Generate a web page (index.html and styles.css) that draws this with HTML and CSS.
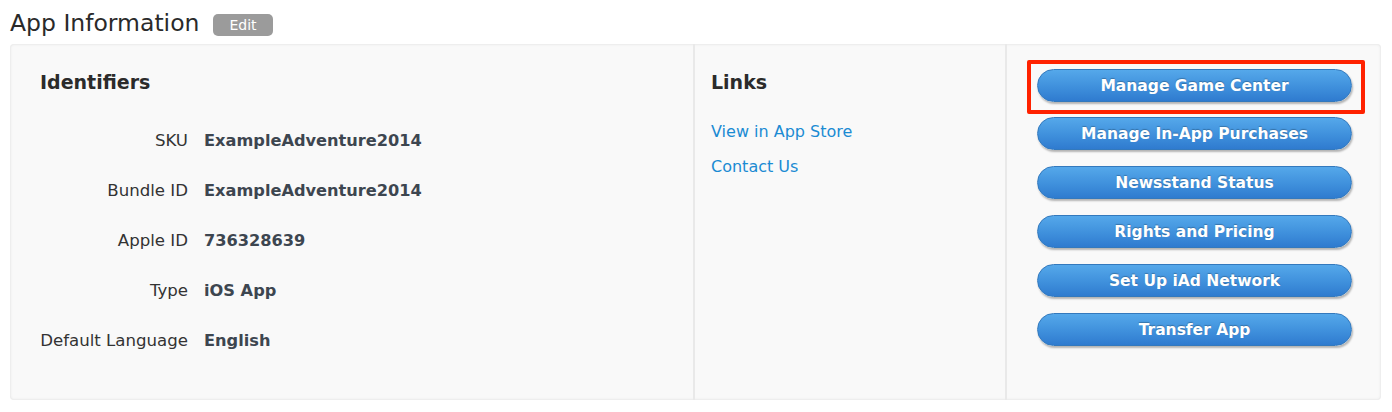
FILE: index.html
```html
<!DOCTYPE html>
<html lang="en">
<head>
    <meta charset="UTF-8">
    <title>App Information</title>
<link rel="stylesheet" href="styles.css">
</head>
<body>
    <div class="header">
        <h2>App Information</h2>
        <span class="edit">Edit</span>
    </div>
    <div class="panel">
        <div class="col identifiers">
            <h3>Identifiers</h3>
            <div class="rows">
                <div class="label">SKU</div><div class="value">ExampleAdventure2014</div>
                <div class="label">Bundle ID</div><div class="value">ExampleAdventure2014</div>
                <div class="label">Apple ID</div><div class="value">736328639</div>
                <div class="label">Type</div><div class="value">iOS App</div>
                <div class="label">Default Language</div><div class="value">English</div>
            </div>
        </div>
        <div class="col links">
            <h3>Links</h3>
            <a href="#">View in App Store</a>
            <a href="#">Contact Us</a>
        </div>
        <div class="col actions">
            <div class="highlight">
                <button class="pill">Manage Game Center</button>
            </div>
            <button class="pill">Manage In-App Purchases</button>
            <button class="pill">Newsstand Status</button>
            <button class="pill">Rights and Pricing</button>
            <button class="pill">Set Up iAd Network</button>
            <button class="pill">Transfer App</button>
        </div>
    </div>
</body>
</html>
```

FILE: styles.css
```css
body {
    margin: 0;
    padding: 8px 10px 0 10px;
    background: #fff;
    font-family: "DejaVu Sans", "Open Sans", sans-serif;
    color: #333;
}
.header {
    display: flex;
    align-items: center;
    height: 30px;
}
.header h2 {
    margin: 0;
    font-size: 23.5px;
    font-weight: normal;
    color: #2a2a2a;
}
.edit {
    margin-left: 14px;
    margin-top: 4px;
    background: #9b9b9b;
    color: #fff;
    font-size: 14px;
    padding: 0 16px;
    height: 22px;
    line-height: 22px;
    border-radius: 5px;
}
.panel {
    display: flex;
    margin-top: 6px;
    width: 1371px;
    height: 356px;
    background: #f9f9f9;
    border-radius: 4px;
    box-shadow: inset 0 0 3px rgba(0, 0, 0, 0.12);
    box-sizing: border-box;
}
.col h3 {
    margin: 0;
    font-size: 19px;
    font-weight: bold;
    color: #2b2b2b;
    line-height: 28px;
}
.identifiers {
    width: 685px;
    padding: 24px 0 0 30px;
    box-sizing: border-box;
    border-right: 2px solid #e9e9e9;
}
.rows {
    display: grid;
    grid-template-columns: 148px auto;
    column-gap: 16px;
    margin-top: 20px;
}
.label, .value {
    line-height: 50px;
    height: 50px;
    white-space: nowrap;
}
.label {
    font-size: 16.6px;
    text-align: right;
    color: #333;
}
.value {
    font-size: 16.2px;
    font-weight: bold;
    color: #3d4650;
}
.links {
    width: 312px;
    padding: 24px 0 0 16px;
    box-sizing: border-box;
    border-right: 2px solid #e9e9e9;
    display: flex;
    flex-direction: column;
}
.links h3 {
    margin-bottom: 18px;
}
.links a {
    color: #1b8bd3;
    text-decoration: none;
    font-size: 16px;
    line-height: 35px;
}
.actions {
    flex: 1;
    padding: 16px 0 0 20px;
    box-sizing: border-box;
    display: flex;
    flex-direction: column;
    gap: 16px;
}
.highlight {
    width: 325px;
    height: 41px;
    border: 4px solid #ff2200;
    border-radius: 2px;
    margin-bottom: -13px;
    padding: 5px 0 0 5px;
    box-sizing: content-box;
}
.highlight .pill {
    margin-left: 1px;
}
.pill {
    display: block;
    width: 315px;
    height: 33px;
    margin-left: 10px;
    border: 1px solid #3379bd;
    border-radius: 17px;
    background: linear-gradient(#55a8ea, #3f90dc 55%, #2f7bcf);
    box-shadow: 1px 2px 2px rgba(0, 0, 0, 0.28);
    color: #fff;
    font-family: "DejaVu Sans", "Open Sans", sans-serif;
    font-size: 15.5px;
    font-weight: bold;
    text-shadow: 0 -1px 1px rgba(0, 0, 0, 0.25);
    padding: 0;
    cursor: pointer;
}
```
